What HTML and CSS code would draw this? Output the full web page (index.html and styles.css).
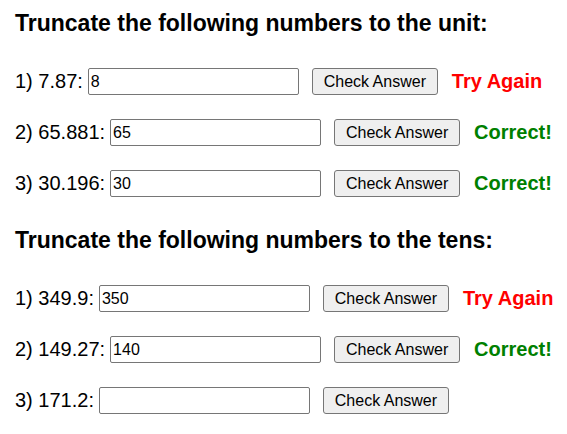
FILE: index.html
```html
<!DOCTYPE html>
<html lang="en">
<head>
    <meta charset="UTF-8">
    <meta name="viewport" content="width=device-width, initial-scale=1.0">
    <title>Truncating Numbers</title>
    <link rel="stylesheet" href="styles.css">
</head>
<body>

    <!-- units -->
    <div class="section">
        <h2>Truncate the following numbers to the unit:</h2>
        <div class="question">
            <label>1) 7.87:</label>
            <input type="text" value="8">
            <button>Check Answer</button>
            <span class="result wrong">Try Again</span>
        </div>
        <div class="question">
            <label>2) 65.881:</label>
            <input type="text" value="65">
            <button>Check Answer</button>
            <span class="result right">Correct!</span>
        </div>
        <div class="question">
            <label>3) 30.196:</label>
            <input type="text" value="30">
            <button>Check Answer</button>
            <span class="result right">Correct!</span>
        </div>
    </div>

    <!-- tens -->
    <div class="section">
        <h2>Truncate the following numbers to the tens:</h2>
        <div class="question">
            <label>1) 349.9:</label>
            <input type="text" value="350">
            <button>Check Answer</button>
            <span class="result wrong">Try Again</span>
        </div>
        <div class="question">
            <label>2) 149.27:</label>
            <input type="text" value="140">
            <button>Check Answer</button>
            <span class="result right">Correct!</span>
        </div>
        <div class="question">
            <label>3) 171.2:</label>
            <input type="text" value="">
            <button>Check Answer</button>
            <span class="result"></span>
        </div>
    </div>

</body>
</html>
```

FILE: styles.css
```css
body { font-family: "Liberation Sans", Arial, sans-serif; font-size: 20px; color: #000; margin: 0; padding: 10px 15px; display: flex; flex-direction: column; gap: 30px; }
.section { display: flex; flex-direction: column; gap: 24px; }
h2 { font-size: 23px; font-weight: bold; margin: 0 0 8px 0; line-height: 26px; white-space: nowrap; }
.question { display: flex; align-items: center; height: 27px; white-space: nowrap; }
.question > * { flex-shrink: 0; }
.question label { margin-right: 5px; }
.question input { width: 211px; height: 27px; box-sizing: border-box; font-family: "Liberation Sans", Arial, sans-serif; font-size: 16px; padding: 1px 2px; border: 1px solid #767676; border-radius: 2px; }
.question button { margin-left: 13px; height: 27px; width: 126px; box-sizing: border-box; font-family: "Liberation Sans", Arial, sans-serif; font-size: 16px; background-color: #efefef; border: 1px solid #767676; border-radius: 3px; padding: 0 6px; color: #000; }
.result { margin-left: 14px; font-weight: bold; }
.wrong { color: #ff0000; }
.right { color: #008000; }
```
